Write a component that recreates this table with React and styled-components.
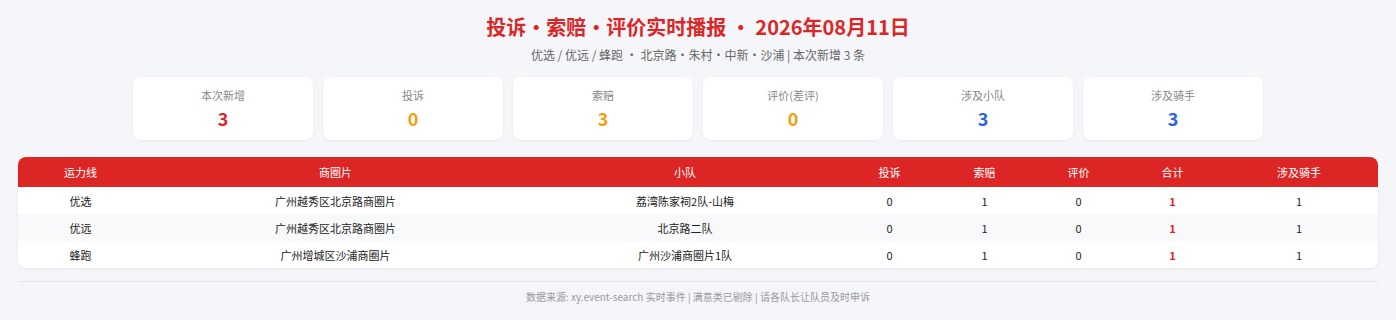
import React from "react";
import styled, { createGlobalStyle } from "styled-components";

const GlobalStyle = createGlobalStyle`
  body {
    margin: 0;
    background: #f5f6fa;
    font-family: "Noto Sans CJK SC", "Noto Sans", sans-serif;
  }
`;

const Page = styled.div`
  padding: 13px 18px 0;
`;

const Title = styled.h1`
  margin: 0;
  text-align: center;
  font-size: 20px;
  line-height: 28px;
  font-weight: 700;
  color: #dc2626;
`;

const Subtitle = styled.div`
  margin-top: 5px;
  text-align: center;
  font-size: 12px;
  line-height: 18px;
  color: #666;
`;

const Cards = styled.div`
  display: flex;
  justify-content: center;
  gap: 10px;
  margin-top: 13px;
`;

const Card = styled.div`
  width: 180px;
  height: 63px;
  box-sizing: border-box;
  background: #fff;
  border-radius: 8px;
  box-shadow: 0 1px 3px rgba(0, 0, 0, 0.06);
  display: flex;
  flex-direction: column;
  align-items: center;
  padding-top: 11px;
`;

const CardLabel = styled.div`
  font-size: 11px;
  line-height: 14px;
  color: #888;
`;

const CardValue = styled.div`
  margin-top: 4px;
  font-size: 18px;
  line-height: 24px;
  font-weight: 700;
  color: ${(p) => p.color};
`;

const TableWrap = styled.div`
  margin-top: 17px;
  background: #fff;
  border-radius: 8px;
  overflow: hidden;
  box-shadow: 0 1px 3px rgba(0, 0, 0, 0.08);
`;

const Table = styled.table`
  width: 100%;
  border-collapse: collapse;
  table-layout: fixed;
  font-size: 11px;
`;

const Th = styled.th`
  background: #dc2626;
  color: #fff;
  font-weight: 400;
  height: 30px;
  padding: 0;
  text-align: center;
`;

const Tr = styled.tr`
  background: ${(p) => (p.$alt ? "#f8f9fb" : "#fff")};
  & + & td {
    border-top: 1px solid #eceef2;
  }
`;

const Td = styled.td`
  height: 27px;
  padding: 0;
  text-align: center;
  color: ${(p) => (p.$red ? "#dc2626" : "#222")};
  font-weight: ${(p) => (p.$red ? 700 : 400)};
`;

const Footer = styled.div`
  margin-top: 13px;
  border-top: 1px solid #e6e8ec;
  padding-top: 7px;
  text-align: center;
  font-size: 10px;
  line-height: 16px;
  color: #999;
`;

const cards = [
  { label: "本次新增", value: 3, color: "#dc2626" },
  { label: "投诉", value: 0, color: "#f59e0b" },
  { label: "索赔", value: 3, color: "#f59e0b" },
  { label: "评价(差评)", value: 0, color: "#f59e0b" },
  { label: "涉及小队", value: 3, color: "#2563eb" },
  { label: "涉及骑手", value: 3, color: "#2563eb" },
];

const cols = [
  { name: "运力线", w: 125 },
  { name: "商圈片", w: 385 },
  { name: "小队", w: 314 },
  { name: "投诉", w: 95 },
  { name: "索赔", w: 95 },
  { name: "评价", w: 93 },
  { name: "合计", w: 95 },
  { name: "涉及骑手" },
];

const rows = [
  ["优选", "广州越秀区北京路商圈片", "荔湾陈家祠2队-山梅", 0, 1, 0, 1, 1],
  ["优远", "广州越秀区北京路商圈片", "北京路二队", 0, 1, 0, 1, 1],
  ["蜂跑", "广州增城区沙浦商圈片", "广州沙浦商圈片1队", 0, 1, 0, 1, 1],
];

const App = () => {
  return (
    <Page>
      <GlobalStyle />
      <Title>投诉·索赔·评价实时播报 · 2026年08月11日</Title>
      <Subtitle>优选 / 优远 / 蜂跑 · 北京路·朱村·中新·沙浦 | 本次新增 3 条</Subtitle>
      <Cards>
        {cards.map((c) => (
          <Card key={c.label}>
            <CardLabel>{c.label}</CardLabel>
            <CardValue color={c.color}>{c.value}</CardValue>
          </Card>
        ))}
      </Cards>
      <TableWrap>
        <Table>
          <colgroup>
            {cols.map((c) => (
              <col key={c.name} style={c.w ? { width: c.w } : undefined} />
            ))}
          </colgroup>
          <thead>
            <tr>
              {cols.map((c) => (
                <Th key={c.name}>{c.name}</Th>
              ))}
            </tr>
          </thead>
          <tbody>
            {rows.map((r, i) => (
              <Tr key={i} $alt={i % 2 === 1}>
                {r.map((v, j) => (
                  <Td key={j} $red={j === 6}>
                    {v}
                  </Td>
                ))}
              </Tr>
            ))}
          </tbody>
        </Table>
      </TableWrap>
      <Footer>数据来源: xy.event-search 实时事件 | 满意类已剔除 | 请各队长让队员及时申诉</Footer>
    </Page>
  );
};

export default App;
